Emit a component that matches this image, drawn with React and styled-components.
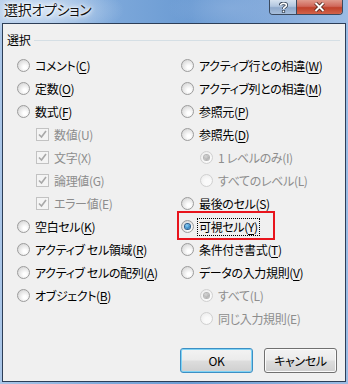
import React from 'react';
import styled, { createGlobalStyle, css } from 'styled-components';

const GlobalStyle = createGlobalStyle`
  html, body {
    margin: 0;
    padding: 0;
    background: #fff;
  }
  body {
    font-family: "Noto Sans CJK JP", "Noto Sans", sans-serif;
    font-feature-settings: "palt";
  }
`;

const Window = styled.div`
  width: 348px;
  height: 384px;
  box-sizing: border-box;
  padding: 0 2px 2px 2px;
  display: flex;
  flex-direction: column;
  background:
    radial-gradient(ellipse 120px 40px at 40px 10px, rgba(220, 232, 246, 0.85), rgba(220, 232, 246, 0) 70%),
    radial-gradient(ellipse 90px 30px at 230px 8px, rgba(140, 176, 222, 0.6), rgba(140, 176, 222, 0) 70%),
    linear-gradient(90deg, #aac6e8 0%, #7ea9db 30%, #6b9bd3 55%, #86acdc 80%, #9bbce4 100%);
`;

const TitleBar = styled.div`
  height: 23px;
  display: flex;
  align-items: flex-start;
  justify-content: space-between;
`;

const Title = styled.div`
  font-size: 14px;
  letter-spacing: -0.3px;
  line-height: 19px;
  padding-left: 2px;
  color: #111;
  text-shadow: 0 0 6px #fff, 0 0 4px #fff, 0 0 2px #fff;
`;

const CaptionButtons = styled.div`
  display: flex;
  margin-right: 3px;
  border: 1px solid #3b4a5f;
  border-top: none;
  border-radius: 0 0 4px 4px;
  overflow: hidden;
  height: 14px;
`;

const CaptionButton = styled.div`
  width: ${({ $w }) => $w}px;
  display: flex;
  align-items: center;
  justify-content: center;
  ${({ $close }) =>
    $close
      ? css`
          background: linear-gradient(#e09a8c 0%, #d0685a 45%, #c0412a 55%, #d2634a 100%);
        `
      : css`
          background: linear-gradient(#d5e1ef 0%, #b2c6df 45%, #8fa9cb 55%, #a7bedb 100%);
          border-right: 1px solid #3b4a5f;
        `}
`;

const Client = styled.div`
  flex: 1;
  border: 1px solid #2d3e57;
  background: #f0f0f0;
  display: flex;
  flex-direction: column;
  font-size: 12px;
  letter-spacing: -0.35px;
  color: #000;
`;

const GroupHeader = styled.div`
  display: flex;
  align-items: center;
  gap: 4px;
  height: 20px;
  margin: 6px 5px 0 4px;
  line-height: 20px;
`;

const GroupLine = styled.div`
  flex: 1;
  height: 1px;
  background: #d5dfe5;
  margin-top: 1px;
`;

const Columns = styled.div`
  display: grid;
  grid-template-columns: 164px 1fr;
  padding: 4px 0 0 14px;
`;

const Column = styled.div`
  display: flex;
  flex-direction: column;
`;

const Row = styled.div`
  position: relative;
  height: 23px;
  display: flex;
  align-items: center;
  gap: 4px;
  padding-left: ${({ $indent }) => ($indent ? 19 : 0)}px;
  color: ${({ $disabled }) => ($disabled ? '#8d8d8d' : '#000')};
  white-space: nowrap;
`;

const Radio = styled.span`
  width: 13px;
  height: 13px;
  box-sizing: border-box;
  border-radius: 50%;
  flex: none;
  display: flex;
  align-items: center;
  justify-content: center;
  border: 1px solid ${({ $disabled }) => ($disabled ? '#d0d0d0' : '#9c9c9c')};
  background: ${({ $disabled }) =>
    $disabled
      ? 'radial-gradient(circle at 60% 65%, #fafafa 30%, #e8e8e8 100%)'
      : 'radial-gradient(circle at 62% 66%, #ffffff 15%, #e4e4e4 60%, #c9c9c9 100%)'};

  &::after {
    content: '';
    display: ${({ $checked }) => ($checked ? 'block' : 'none')};
    width: 5px;
    height: 5px;
    border-radius: 50%;
    background: ${({ $disabled }) =>
      $disabled
        ? 'radial-gradient(circle at 40% 35%, #d6d6d6, #9c9c9c)'
        : 'radial-gradient(circle at 40% 35%, #8ad3fb, #1c6fb0 80%)'};
    box-shadow: 0 0 0 1px ${({ $disabled }) => ($disabled ? '#b5b5b5' : '#2a5d8c')};
  }
`;

const CheckBox = styled.span`
  width: 13px;
  height: 13px;
  box-sizing: border-box;
  flex: none;
  border: 1px solid #c2c2c2;
  background: #f4f4f4;
  display: flex;
  align-items: center;
  justify-content: center;
`;

const Label = styled.span`
  line-height: 16px;
  padding: 0 1px;
  border: 1px dotted ${({ $focus }) => ($focus ? '#000' : 'transparent')};
  margin-left: -1px;
`;

const Key = styled.span`
  text-decoration: underline;
  text-underline-offset: 2px;
`;

const Highlight = styled.div`
  position: absolute;
  left: -4px;
  top: -4px;
  width: 98px;
  height: 29px;
  box-sizing: border-box;
  border: 2px solid #e8141c;
  pointer-events: none;
`;

const ButtonRow = styled.div`
  display: flex;
  justify-content: flex-end;
  gap: 11px;
  margin-top: auto;
  padding: 0 8px 8px 0;
`;

const Button = styled.div`
  width: 73px;
  height: 25px;
  box-sizing: border-box;
  border-radius: 3px;
  display: flex;
  align-items: center;
  justify-content: center;
  font-size: 12px;
  border: 1px solid ${({ $default }) => ($default ? '#3c8fc4' : '#707070')};
  box-shadow: inset 0 0 0 1px ${({ $default }) => ($default ? '#7fd3f5' : '#fbfbfb')};
  background: linear-gradient(#f3f3f3 0%, #ebebeb 48%, #dddddd 52%, #cfcfcf 100%);
`;

const Check = () => (
  <svg width="9" height="9" viewBox="0 0 9 9">
    <path d="M1 4.5 L3.5 7 L8 1" fill="none" stroke="#a8a8a8" strokeWidth="1.6" />
  </svg>
);

const HelpGlyph = () => (
  <svg width="9" height="11" viewBox="0 0 9 11">
    <path
      d="M1.5 3.2 C1.5 0.8 7.5 0.8 7.5 3.2 C7.5 5 4.5 5 4.5 7"
      fill="none"
      stroke="#2f3d50"
      strokeWidth="3.2"
    />
    <rect x="2.9" y="8" width="3.2" height="2.8" fill="#2f3d50" />
    <path
      d="M1.5 3.2 C1.5 0.8 7.5 0.8 7.5 3.2 C7.5 5 4.5 5 4.5 7"
      fill="none"
      stroke="#fff"
      strokeWidth="1.6"
    />
    <rect x="3.7" y="8.6" width="1.6" height="1.6" fill="#fff" />
  </svg>
);

const CloseGlyph = () => (
  <svg width="11" height="10" viewBox="0 0 11 10">
    <path d="M1.5 1 L9.5 9 M9.5 1 L1.5 9" stroke="#4a2018" strokeWidth="3.6" />
    <path d="M1.5 1 L9.5 9 M9.5 1 L1.5 9" stroke="#fff" strokeWidth="2" />
  </svg>
);

const leftOptions = [
  { label: 'コメント', accel: 'C' },
  { label: '定数', accel: 'O' },
  { label: '数式', accel: 'F' },
  { label: '数値(U)', check: true, indent: true, disabled: true, checked: true },
  { label: '文字(X)', check: true, indent: true, disabled: true, checked: true },
  { label: '論理値(G)', check: true, indent: true, disabled: true, checked: true },
  { label: 'エラー値(E)', check: true, indent: true, disabled: true, checked: true },
  { label: '空白セル', accel: 'K' },
  { label: 'アクティブ セル領域', accel: 'R' },
  { label: 'アクティブ セルの配列', accel: 'A' },
  { label: 'オブジェクト', accel: 'B' },
];

const rightOptions = [
  { label: 'アクティブ行との相違', accel: 'W' },
  { label: 'アクティブ列との相違', accel: 'M' },
  { label: '参照元', accel: 'P' },
  { label: '参照先', accel: 'D' },
  { label: '1 レベルのみ(I)', indent: true, disabled: true, checked: true },
  { label: 'すべてのレベル(L)', indent: true, disabled: true },
  { label: '最後のセル', accel: 'S' },
  { label: '可視セル', accel: 'Y', checked: true, focus: true, highlight: true },
  { label: '条件付き書式', accel: 'T' },
  { label: 'データの入力規則', accel: 'V' },
  { label: 'すべて(L)', indent: true, disabled: true, checked: true },
  { label: '同じ入力規則(E)', indent: true, disabled: true },
];

const Option = ({ option }) => (
  <Row $indent={option.indent} $disabled={option.disabled}>
    {option.check ? (
      <CheckBox>{option.checked && <Check />}</CheckBox>
    ) : (
      <Radio $checked={option.checked} $disabled={option.disabled} />
    )}
    <Label $focus={option.focus}>
      {option.label}
      {option.accel && (
        <>
          (<Key>{option.accel}</Key>)
        </>
      )}
    </Label>
    {option.highlight && <Highlight />}
  </Row>
);

const App = () => (
  <>
    <GlobalStyle />
    <Window>
      <TitleBar>
        <Title>選択オプション</Title>
        <CaptionButtons>
          <CaptionButton $w={26}>
            <HelpGlyph />
          </CaptionButton>
          <CaptionButton $w={45} $close>
            <CloseGlyph />
          </CaptionButton>
        </CaptionButtons>
      </TitleBar>
      <Client>
        <GroupHeader>
          選択
          <GroupLine />
        </GroupHeader>
        <Columns>
          <Column>
            {leftOptions.map((o) => (
              <Option key={o.label} option={o} />
            ))}
          </Column>
          <Column>
            {rightOptions.map((o) => (
              <Option key={o.label} option={o} />
            ))}
          </Column>
        </Columns>
        <ButtonRow>
          <Button $default>OK</Button>
          <Button>キャンセル</Button>
        </ButtonRow>
      </Client>
    </Window>
  </>
);

export default App;
